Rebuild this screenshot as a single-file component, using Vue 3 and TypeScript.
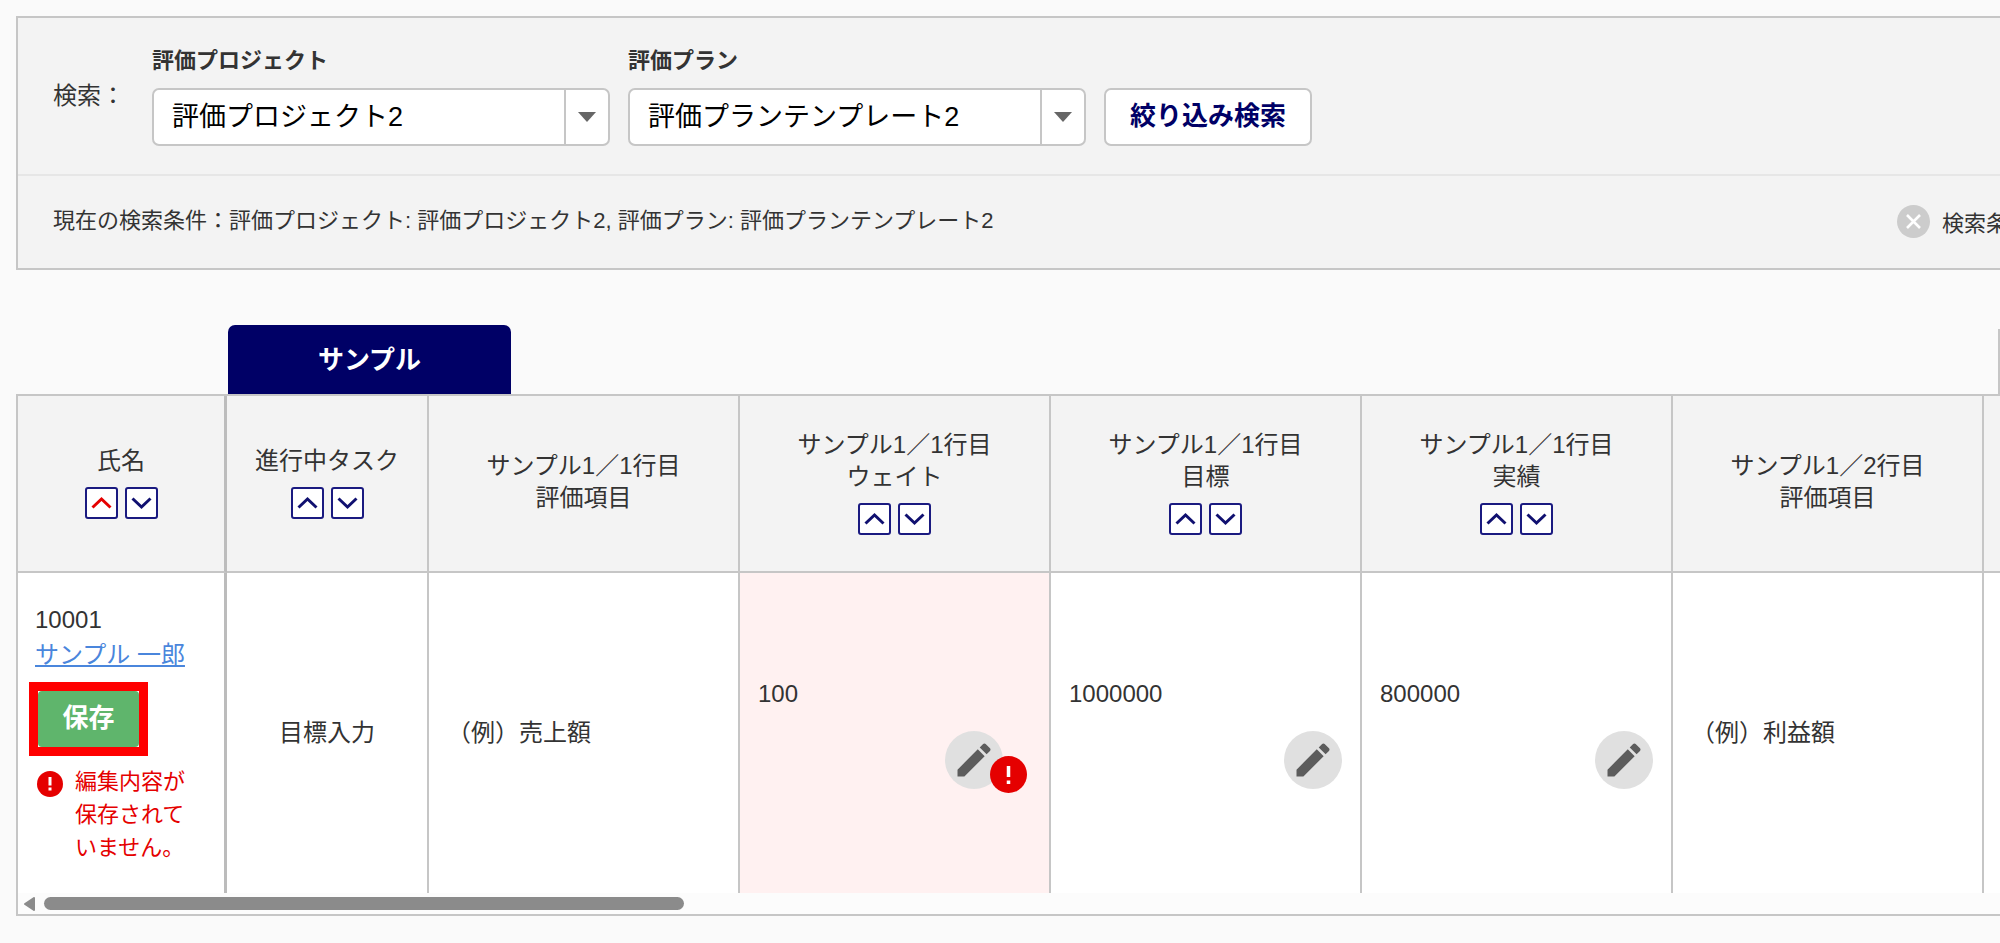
<script setup lang="ts">
import { ref } from 'vue'

interface Column {
  key: string
  lines: string[]
  sortable: boolean
  kind: 'name' | 'task' | 'text' | 'edit' | 'blank'
  value?: string
  error?: boolean
}

const project = ref('評価プロジェクト2')
const plan = ref('評価プランテンプレート2')
const sort = ref('name-asc')

const columns: Column[] = [
  { key: 'name', lines: ['氏名'], sortable: true, kind: 'name' },
  { key: 'task', lines: ['進行中タスク'], sortable: true, kind: 'task', value: '目標入力' },
  { key: 'item1', lines: ['サンプル1／1行目', '評価項目'], sortable: false, kind: 'text', value: '（例）売上額' },
  { key: 'weight', lines: ['サンプル1／1行目', 'ウェイト'], sortable: true, kind: 'edit', value: '100', error: true },
  { key: 'goal', lines: ['サンプル1／1行目', '目標'], sortable: true, kind: 'edit', value: '1000000' },
  { key: 'result', lines: ['サンプル1／1行目', '実績'], sortable: true, kind: 'edit', value: '800000' },
  { key: 'item2', lines: ['サンプル1／2行目', '評価項目'], sortable: false, kind: 'text', value: '（例）利益額' },
  { key: 'more', lines: [], sortable: false, kind: 'blank' },
]
</script>

<template>
  <main class="page">
    <section class="search">
      <form class="search-form" @submit.prevent>
        <span class="search-title">検索：</span>
        <div class="field">
          <label for="project">評価プロジェクト</label>
          <div class="select">
            <select id="project" v-model="project">
              <option>評価プロジェクト2</option>
            </select>
            <span class="select-arrow">
              <svg width="18" height="10" viewBox="0 0 18 10"><path d="M0 0h18l-9 10z" fill="#666" /></svg>
            </span>
          </div>
        </div>
        <div class="field">
          <label for="plan">評価プラン</label>
          <div class="select">
            <select id="plan" v-model="plan">
              <option>評価プランテンプレート2</option>
            </select>
            <span class="select-arrow">
              <svg width="18" height="10" viewBox="0 0 18 10"><path d="M0 0h18l-9 10z" fill="#666" /></svg>
            </span>
          </div>
        </div>
        <button class="search-button" type="submit">絞り込み検索</button>
      </form>
      <div class="conditions">
        <p>現在の検索条件：評価プロジェクト: {{ project }}, 評価プラン: {{ plan }}</p>
        <button class="clear" type="button">
          <svg width="33" height="33" viewBox="0 0 33 33">
            <circle cx="16.5" cy="16.5" r="16.5" fill="#ccc" />
            <path d="M10 10l13 13M23 10l-13 13" stroke="#fff" stroke-width="2.6" />
          </svg>
          <span>検索条件</span>
        </button>
      </div>
    </section>

    <nav class="tabs">
      <button class="tab" type="button">サンプル</button>
      <span class="tab-edge"></span>
    </nav>

    <section class="sheet">
      <table>
        <colgroup>
          <col v-for="c in columns" :key="c.key" :class="'col-' + c.kind" />
        </colgroup>
        <thead>
          <tr>
            <th v-for="c in columns" :key="c.key" :class="'cell-' + c.kind" scope="col">
              <div v-for="line in c.lines" :key="line">{{ line }}</div>
              <div v-if="c.sortable" class="sorts">
                <button
                  type="button"
                  aria-label="昇順"
                  :class="{ active: sort === c.key + '-asc' }"
                  @click="sort = c.key + '-asc'"
                >
                  <svg width="21" height="14" viewBox="0 0 21 14"><path d="M1.5 11.5l9-8.500 9 8.500" /></svg>
                </button>
                <button
                  type="button"
                  aria-label="降順"
                  :class="{ active: sort === c.key + '-desc' }"
                  @click="sort = c.key + '-desc'"
                >
                  <svg width="21" height="14" viewBox="0 0 21 14"><path d="M1.5 2.500l9 8.500 9-8.500" /></svg>
                </button>
              </div>
            </th>
          </tr>
        </thead>
        <tbody>
          <tr>
            <td v-for="c in columns" :key="c.key" :class="['cell-' + c.kind, { invalid: c.error }]">
              <template v-if="c.kind === 'name'">
                <div class="person">10001</div>
                <div class="person"><a href="#">サンプル 一郎</a></div>
                <div class="highlight"><button class="save" type="button">保存</button></div>
                <div class="warning">
                  <svg width="26" height="26" viewBox="0 0 26 26">
                    <circle cx="13" cy="13" r="13" fill="#e50000" />
                    <path d="M13 6v8.500M13 16.500v3" stroke="#fff" stroke-width="3" />
                  </svg>
                  <p>編集内容が保存されていません。</p>
                </div>
              </template>
              <template v-else-if="c.kind === 'edit'">
                <div>{{ c.value }}</div>
                <div class="edit-row">
                  <button class="edit" type="button" aria-label="編集">
                    <svg width="44" height="44" viewBox="0 0 24 24">
                      <path
                        fill="#5c5c5c"
                        d="M3 17.25V21h3.75L17.81 9.94l-3.75-3.75L3 17.25zM20.71 7.04c.39-.39.39-1.02 0-1.41l-2.34-2.34c-.39-.39-1.02-.39-1.41 0l-1.83 1.83 3.75 3.75 1.83-1.83z"
                      />
                    </svg>
                    <svg v-if="c.error" class="badge" width="37" height="37" viewBox="0 0 37 37">
                      <circle cx="18.500" cy="18.500" r="18.500" fill="#e50000" />
                      <path d="M18.500 10v11M18.500 24.500v3.500" stroke="#fff" stroke-width="3.500" />
                    </svg>
                  </button>
                </div>
              </template>
              <template v-else>{{ c.value }}</template>
            </td>
          </tr>
        </tbody>
      </table>
      <div class="scroller">
        <svg width="12" height="14" viewBox="0 0 12 14">
          <path d="M1 7L10 1v12z" fill="#8b8b8b" stroke="#8b8b8b" stroke-width="2" stroke-linejoin="round" />
        </svg>
        <span class="thumb"></span>
      </div>
    </section>
  </main>
</template>

<style>
body {
  background: #fafafa;
  overflow: hidden;
}
</style>

<style scoped>
.page {
  padding: 16px 0 24px 16px;
  color: #333;
  font-family: 'Liberation Sans', 'Noto Sans CJK JP', sans-serif;
  font-size: 24px;
  line-height: 32px;
  overflow: hidden;
}
.page * {
  box-sizing: border-box;
}
button,
select {
  font-family: inherit;
  cursor: pointer;
}
p {
  margin: 0;
}
svg {
  display: block;
  flex: none;
}
.search {
  border: 2px solid #c6c6c6;
  border-right: 0;
  background: #f3f3f3;
  overflow: hidden;
}
.search-form {
  display: flex;
  align-items: flex-end;
  gap: 18px;
  padding: 27px 35px 28px;
  border-bottom: 2px solid #e6e6e6;
}
.search-title {
  align-self: center;
  margin-right: 9px;
}
.field {
  display: flex;
  flex-direction: column;
  gap: 11px;
  width: 458px;
}
.field label {
  font-size: 22px;
  font-weight: bold;
}
.select {
  position: relative;
}
.select select {
  display: block;
  appearance: none;
  width: 100%;
  height: 58px;
  padding: 0 52px 0 18px;
  border: 2px solid #c6c6c6;
  border-radius: 7px;
  background: #fff;
  color: #000;
  font-size: 27px;
}
.select-arrow {
  position: absolute;
  inset: 2px 2px 2px auto;
  width: 44px;
  display: flex;
  align-items: center;
  justify-content: center;
  border-left: 2px solid #c6c6c6;
  pointer-events: none;
}
.search-button {
  height: 58px;
  padding: 0 24px 8px;
  border: 2px solid #c6c6c6;
  border-radius: 7px;
  background: #fff;
  color: #000066;
  font-size: 26px;
  font-weight: bold;
}
.conditions {
  display: flex;
  align-items: center;
  justify-content: space-between;
  height: 92px;
  padding: 0 0 2px 35px;
  font-size: 22px;
  white-space: nowrap;
}
.clear {
  display: flex;
  flex: 0 0 103px;
  align-items: center;
  justify-content: flex-start;
  gap: 12px;
  min-width: 0;
  padding: 0;
  border: 0;
  background: none;
  color: #333;
  font-size: 22px;
  white-space: nowrap;
}
.tabs {
  display: flex;
  align-items: flex-end;
  justify-content: space-between;
  margin-top: 55px;
  padding-left: 212px;
}
.tab {
  width: 283px;
  height: 69px;
  padding: 0 0 4px;
  border: 0;
  border-radius: 7px 7px 0 0;
  background: #000066;
  color: #fff;
  font-size: 26px;
  font-weight: bold;
}
.tab-edge {
  width: 2px;
  height: 65px;
  background: #c6c6c6;
}
.sheet {
  border: 2px solid #c6c6c6;
  border-right: 0;
  background: #fcfcfc;
  overflow: hidden;
}
table {
  table-layout: fixed;
  width: 2277px;
  border-collapse: separate;
  border-spacing: 0;
}
.col-name {
  width: 209px;
}
.col-task {
  width: 202px;
}
.col-text,
.col-edit,
.col-blank {
  width: 311px;
}
th {
  height: 177px;
  padding: 0 0 3px;
  border-right: 2px solid #c6c6c6;
  border-bottom: 2px solid #c6c6c6;
  background: #f3f3f3;
  font-weight: normal;
  text-align: center;
}
td {
  height: 320px;
  padding: 0 18px;
  border-right: 2px solid #c6c6c6;
  background: #fff;
}
.cell-name {
  border-right: 3px solid #bcbcbc;
}
td.cell-name {
  padding: 0 17px;
}
td.cell-task {
  text-align: center;
}
td.invalid {
  background: #fff1f1;
}
.sorts {
  display: flex;
  justify-content: center;
  gap: 7px;
  margin-top: 10px;
}
.sorts button {
  display: flex;
  align-items: center;
  justify-content: center;
  width: 33px;
  height: 32px;
  padding: 0;
  border: 2px solid #1a1a80;
  border-radius: 3px;
  background: #fff;
  color: #101070;
}
.sorts button.active {
  color: #e50000;
}
.sorts path {
  fill: none;
  stroke: currentColor;
  stroke-width: 3;
}
.person {
  line-height: 35px;
}
a {
  color: #4a86dc;
  text-decoration: underline;
}
.highlight {
  display: flex;
  width: 119px;
  margin: 10px 0 9px -6px;
  border: 9px solid #f00;
}
.save {
  width: 100%;
  height: 56px;
  padding: 0 0 8px;
  border: 0;
  border-radius: 4px;
  background: #5fb56c;
  color: #fff;
  font-size: 26px;
  font-weight: bold;
}
.warning {
  display: flex;
  gap: 12px;
  padding-left: 2px;
  color: #e50000;
  font-size: 22px;
  line-height: 33px;
}
.warning svg {
  margin-top: 6px;
}
.warning p {
  width: 110px;
}
.edit-row {
  display: flex;
  justify-content: flex-end;
  margin-top: 21px;
}
.edit {
  position: relative;
  display: flex;
  align-items: center;
  justify-content: center;
  width: 58px;
  height: 58px;
  padding: 0;
  border: 0;
  border-radius: 50%;
  background: #e0e0e0;
}
.invalid .edit {
  margin-right: 28px;
}
.badge {
  position: absolute;
  top: 25px;
  left: 45px;
}
.scroller {
  display: flex;
  align-items: center;
  gap: 8px;
  height: 21px;
  padding-left: 6px;
}
.thumb {
  width: 32.4%;
  height: 13px;
  border-radius: 7px;
  background: #8b8b8b;
}
</style>
